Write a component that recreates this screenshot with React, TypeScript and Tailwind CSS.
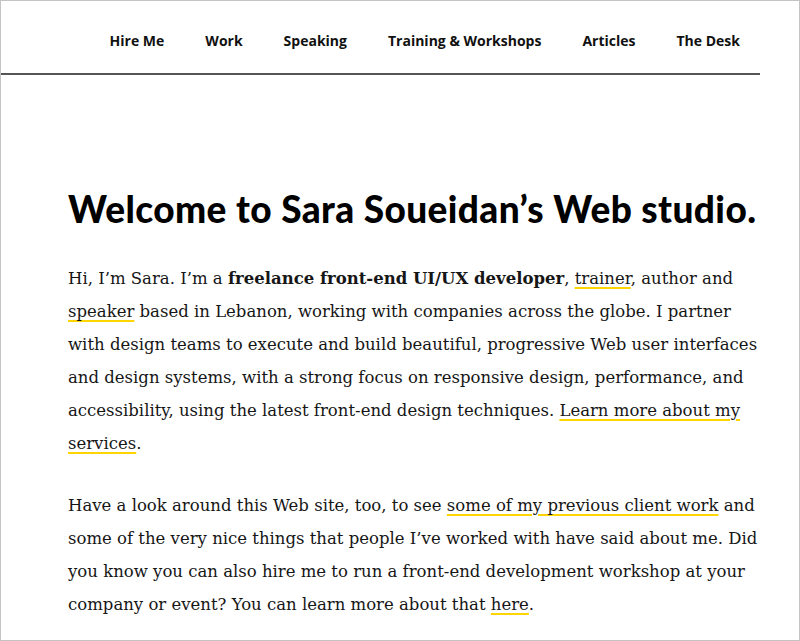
const navItems = ["Hire Me", "Work", "Speaking", "Training & Workshops", "Articles", "The Desk"];

const Mark = ({ children }: { children: React.ReactNode }) => (
  <a
    href="#"
    className="underline decoration-[#ffd500] decoration-2 underline-offset-[3px]"
  >
    {children}
  </a>
);

const App = () => {
  return (
    <div className="w-[800px] h-[641px] overflow-hidden bg-white border border-[#c4c4c4]">
      <header className="w-[759px] h-[74px] border-b-2 border-[#555] flex items-center justify-end gap-[41px] pr-5 pt-[6px] font-['Open_Sans',sans-serif] text-[14px] font-bold text-[#111]">
        {navItems.map((item) => (
          <a key={item} href="#">
            {item}
          </a>
        ))}
      </header>

      <main className="pl-[67px] pr-4 pt-[114px] text-[#161616]">
        <h1 className="font-['Lato',sans-serif] font-black text-[37px] leading-[40px] text-black tracking-[0.4px]">
          Welcome to Sara Soueidan’s Web studio.
        </h1>

        <p className="mt-[33px] font-['DejaVu_Serif',serif] text-[16.5px] leading-[33px] whitespace-nowrap">
          Hi, I’m Sara. I’m a <strong>freelance front-end UI/UX developer</strong>, <Mark>trainer</Mark>, author and
          <br />
          <Mark>speaker</Mark> based in Lebanon, working with companies across the globe. I partner
          <br />
          with design teams to execute and build beautiful, progressive Web user interfaces
          <br />
          and design systems, with a strong focus on responsive design, performance, and
          <br />
          accessibility, using the latest front-end design techniques. <Mark>Learn more about my</Mark>
          <br />
          <Mark>services</Mark>.
        </p>

        <p className="mt-[29px] font-['DejaVu_Serif',serif] text-[16.5px] leading-[33px] whitespace-nowrap">
          Have a look around this Web site, too, to see <Mark>some of my previous client work</Mark> and
          <br />
          some of the very nice things that people I’ve worked with have said about me. Did
          <br />
          you know you can also hire me to run a front-end development workshop at your
          <br />
          company or event? You can learn more about that <Mark>here</Mark>.
        </p>
      </main>
    </div>
  );
};

export default App;
